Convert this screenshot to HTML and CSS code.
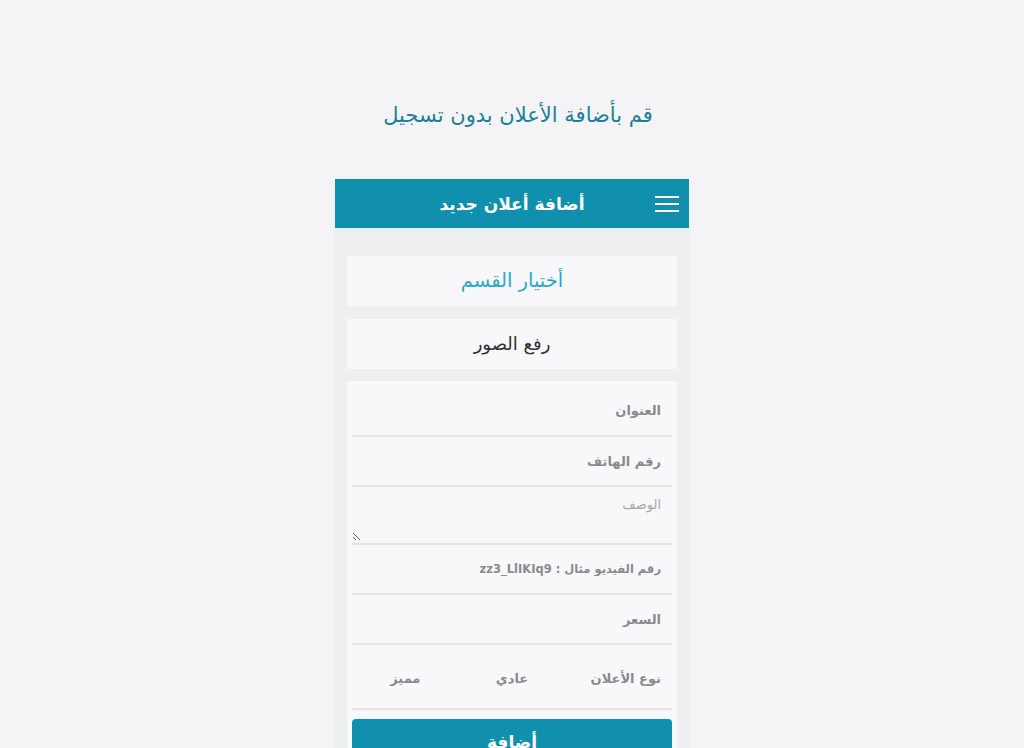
FILE: index.html
```html
<!DOCTYPE html>
<html lang="ar" dir="rtl">
<head>
    <meta charset="UTF-8">
    <meta name="viewport" content="width=device-width, initial-scale=1.0">
    <title>أضافة أعلان جديد</title>
    <link rel="stylesheet" href="styles.css">
</head>
<body>
    <h1 class="page-title">قم بأضافة الأعلان بدون تسجيل</h1>

    <div class="card">
        <div class="card-header">
            <span class="menu-btn">
                <svg width="24" height="18" viewBox="0 0 24 18">
                    <rect x="0" y="1" width="24" height="2" fill="#fff"/>
                    <rect x="0" y="8" width="24" height="2" fill="#fff"/>
                    <rect x="0" y="15" width="24" height="2" fill="#fff"/>
                </svg>
            </span>
            <h2>أضافة أعلان جديد</h2>
        </div>

        <div class="card-body">
            <div class="panel select-cat">أختيار القسم</div>
            <div class="panel upload">رفع الصور</div>

            <!-- بيانات الأعلان -->
            <form class="panel form-panel">
                <div class="field first"><input type="text" placeholder="العنوان"></div>
                <div class="field"><input type="text" placeholder="رقم الهاتف"></div>
                <div class="field area"><textarea placeholder="الوصف"></textarea></div>
                <div class="field"><input type="text" class="small" placeholder="رقم الفيديو مثال : zz3_LlIKIq9"></div>
                <div class="field"><input type="text" placeholder="السعر"></div>
                <div class="field radios">
                    <span class="radio-label">نوع الأعلان</span>
                    <label><input type="radio" name="type"> عادي</label>
                    <label><input type="radio" name="type"> مميز</label>
                </div>
                <button type="button" class="submit">أضافة</button>
            </form>
        </div>
    </div>
</body>
</html>
```

FILE: styles.css
```css
body {
    font-family: "DejaVu Sans", "Noto Sans", sans-serif;
    margin: 0;
    padding: 0;
    background-color: #f4f4f7;
    color: #333;
}
.page-title {
    margin: 0;
    padding-top: 99px;
    padding-left: 12px;
    text-align: center;
    font-size: 21px;
    font-weight: normal;
    color: #1b7f9c;
    line-height: 32px;
}
.card {
    width: 354px;
    margin: 48px auto 0;
    background-color: #eeeff1;
    box-shadow: 0 0 4px rgba(0, 0, 0, 0.04);
}
.card-header {
    height: 49px;
    background-color: #1190ad;
    display: flex;
    align-items: center;
    position: relative;
}
.card-header h2 {
    margin: 0;
    flex: 1;
    text-align: center;
    color: white;
    font-size: 17px;
    font-weight: bold;
    padding-left: 34px;
}
.menu-btn {
    display: flex;
    padding-right: 10px;
}
.card-body {
    padding: 28px 12px 0 12px;
}
.panel {
    background-color: #f8f8fa;
    border-radius: 2px;
    margin-bottom: 13px;
}
.select-cat, .upload {
    height: 50px;
    line-height: 50px;
    text-align: center;
    font-size: 18px;
}
.select-cat { color: #2aa9cf; font-size: 19.5px; }
.upload { color: #333; margin-bottom: 12px; }
.form-panel {
    padding: 4px 5px 0 5px;
    margin-bottom: 0;
}
.field {
    border-bottom: 2px solid #e6e6e9;
    height: 48px;
    display: flex;
    align-items: center;
}
.field.first { height: 50px; }
.field input[type=text], .field textarea {
    width: 100%;
    border: none;
    background: transparent;
    font-family: inherit;
    font-size: 13px;
    font-weight: bold;
    color: #555;
    padding: 0 11px;
    outline: none;
}
.field input::placeholder { color: #8a8a8d; }
.field input.small { font-size: 11.5px; }
.field.area {
    height: 56px;
    align-items: stretch;
}
.field textarea {
    resize: vertical;
    font-weight: normal;
    padding-top: 10px;
    height: 54px;
    box-sizing: border-box;
}
.field textarea::placeholder { color: #a6a6a9; }
.field.radios {
    height: 65px;
    display: grid;
    grid-template-columns: 1fr 1fr 1fr;
    font-size: 13px;
    font-weight: bold;
    color: #8a8a8d;
    align-items: center;
    padding-top: 3px;
    box-sizing: border-box;
}
.radio-label { padding-right: 11px; }
.radios label { text-align: center; }
.radios input { display: none; }
.submit {
    display: block;
    width: 100%;
    margin-top: 9px;
    height: 46px;
    border: none;
    border-radius: 4px;
    background-color: #1190ad;
    color: white;
    font-family: inherit;
    font-size: 17px;
    font-weight: bold;
}
```
